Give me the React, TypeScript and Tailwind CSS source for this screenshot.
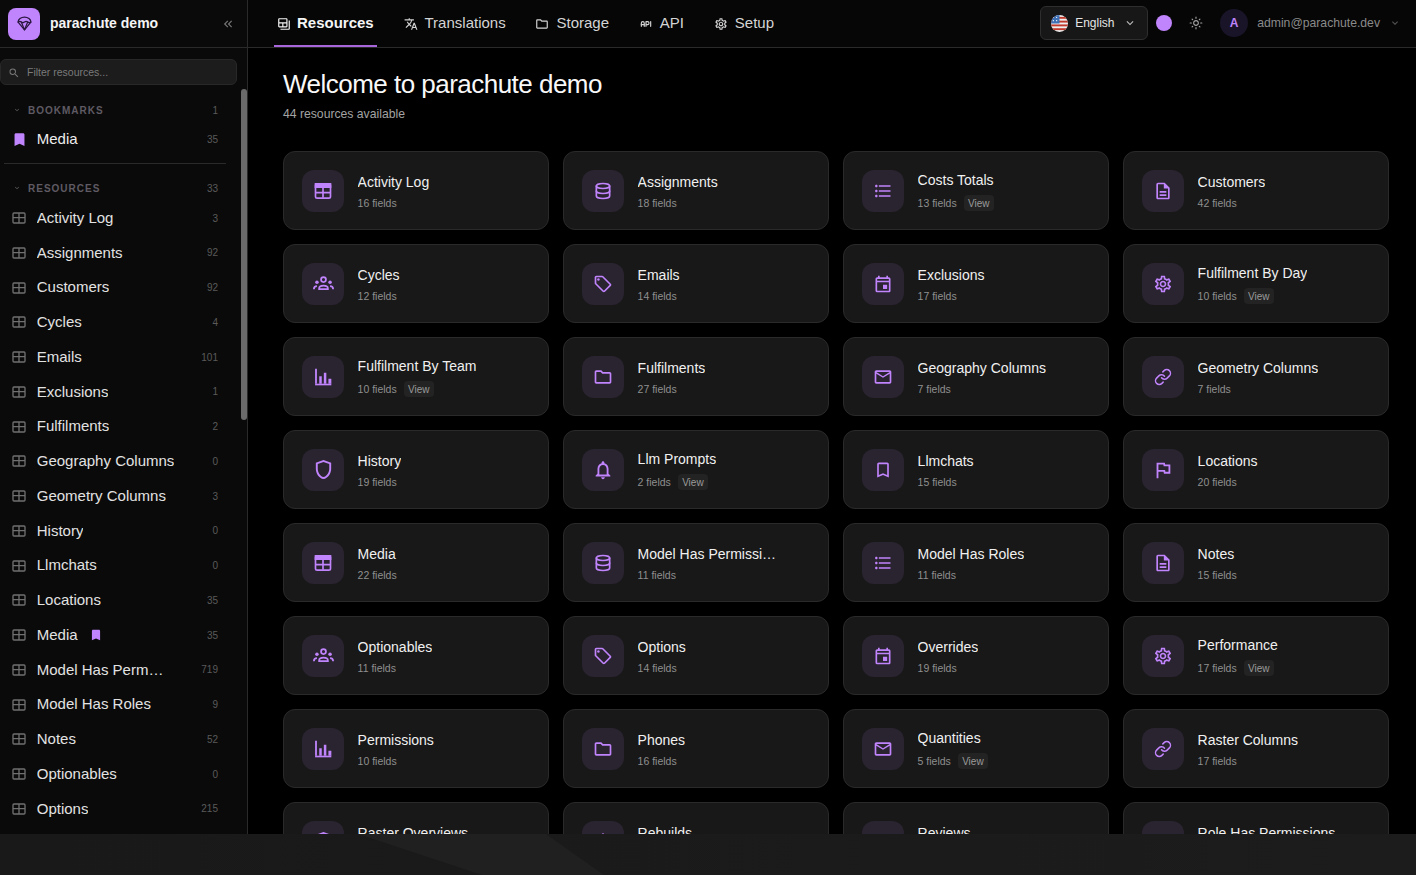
import type { IconType } from "react-icons";
import { LuLink } from "react-icons/lu";
import {
  MdBookmark,
  MdFormatListBulleted,
  MdKeyboardArrowDown,
  MdKeyboardDoubleArrowLeft,
  MdOutlineBackupTable,
  MdOutlineBookmarkBorder,
  MdOutlineDescription,
  MdOutlineEvent,
  MdOutlineFlag,
  MdOutlineFolder,
  MdOutlineLightMode,
  MdOutlineLocalOffer,
  MdOutlineMailOutline,
  MdOutlineNotifications,
  MdOutlineSettings,
  MdOutlineShield,
  MdSearch,
  MdTranslate,
} from "react-icons/md";
import { TbApi, TbDatabase } from "react-icons/tb";

const TableIcon = ({ className }: { className?: string }) => (
  <svg viewBox="0 0 24 24" className={className} fill="none" stroke="currentColor" strokeWidth="2">
    <rect x="3" y="3.500" width="18" height="17" rx="2" />
    <path d="M3 3.500h18v4H3z" fill="currentColor" />
    <path d="M3 14h18M12 7v13" />
  </svg>
);

const RowTableIcon = ({ className }: { className?: string }) => (
  <svg viewBox="0 0 24 24" className={className} fill="none" stroke="currentColor" strokeWidth="2">
    <rect x="3" y="4.500" width="18" height="15" rx="1.500" />
    <path d="M3 11.500h18M12 4.500v15" />
  </svg>
);

const ChartIcon = ({ className }: { className?: string }) => (
  <svg viewBox="0 0 24 24" className={className} fill="currentColor">
    <path d="M2.500 2h2.200v18h-2.200z" />
    <path d="M7.500 11h3v9h-3zM13 7h3v13h-3zM18.500 14h3.500v6h-3.500z" />
    <path d="M2.500 20h19.500v2H2.500z" />
  </svg>
);

const GroupIcon = ({ className }: { className?: string }) => (
  <svg viewBox="0 0 24 24" className={className} fill="none" stroke="currentColor" strokeWidth="2">
    <circle cx="12" cy="7.500" r="2.800" />
    <circle cx="4.500" cy="10.500" r="2" fill="currentColor" stroke="none" />
    <circle cx="19.500" cy="10.500" r="2" fill="currentColor" stroke="none" />
    <path d="M7 18.500v-.8c0-2 2.200-3.200 5-3.200s5 1.200 5 3.200v.8z" />
    <path d="M1 18.500c0-2.200 1.200-3.500 3.500-3.500M23 18.500c0-2.200-1.200-3.500-3.500-3.500" />
  </svg>
);

const cardIcons: { icon: IconType | typeof TableIcon; size: string }[] = [
  { icon: TableIcon, size: "w-[20px] h-[20px]" },
  { icon: TbDatabase, size: "w-[20px] h-[20px]" },
  { icon: MdFormatListBulleted, size: "w-[20px] h-[20px]" },
  { icon: MdOutlineDescription, size: "w-[20px] h-[20px]" },
  { icon: GroupIcon, size: "w-[21px] h-[21px]" },
  { icon: MdOutlineLocalOffer, size: "w-[20px] h-[20px]" },
  { icon: MdOutlineEvent, size: "w-[20px] h-[20px]" },
  { icon: MdOutlineSettings, size: "w-[20px] h-[20px]" },
  { icon: ChartIcon, size: "w-[20px] h-[20px]" },
  { icon: MdOutlineFolder, size: "w-[20px] h-[20px]" },
  { icon: MdOutlineMailOutline, size: "w-[20px] h-[20px]" },
  { icon: LuLink, size: "w-[18px] h-[18px]" },
  { icon: MdOutlineShield, size: "w-[23px] h-[23px]" },
  { icon: MdOutlineNotifications, size: "w-[22px] h-[22px]" },
  { icon: MdOutlineBookmarkBorder, size: "w-[20px] h-[20px]" },
  { icon: MdOutlineFlag, size: "w-[22px] h-[22px]" },
];

const resources = [
  { name: "Activity Log", fields: 16 },
  { name: "Assignments", fields: 18 },
  { name: "Costs Totals", fields: 13, view: true },
  { name: "Customers", fields: 42 },
  { name: "Cycles", fields: 12 },
  { name: "Emails", fields: 14 },
  { name: "Exclusions", fields: 17 },
  { name: "Fulfilment By Day", fields: 10, view: true },
  { name: "Fulfilment By Team", fields: 10, view: true },
  { name: "Fulfilments", fields: 27 },
  { name: "Geography Columns", fields: 7 },
  { name: "Geometry Columns", fields: 7 },
  { name: "History", fields: 19 },
  { name: "Llm Prompts", fields: 2, view: true },
  { name: "Llmchats", fields: 15 },
  { name: "Locations", fields: 20 },
  { name: "Media", fields: 22 },
  { name: "Model Has Permissions", fields: 11 },
  { name: "Model Has Roles", fields: 11 },
  { name: "Notes", fields: 15 },
  { name: "Optionables", fields: 11 },
  { name: "Options", fields: 14 },
  { name: "Overrides", fields: 19 },
  { name: "Performance", fields: 17, view: true },
  { name: "Permissions", fields: 10 },
  { name: "Phones", fields: 16 },
  { name: "Quantities", fields: 5, view: true },
  { name: "Raster Columns", fields: 17 },
  { name: "Raster Overviews", fields: 10 },
  { name: "Rebuilds", fields: 10 },
  { name: "Reviews", fields: 10 },
  { name: "Role Has Permissions", fields: 10 },
];

const sidebarRows = [
  { name: "Activity Log", count: 3 },
  { name: "Assignments", count: 92 },
  { name: "Customers", count: 92 },
  { name: "Cycles", count: 4 },
  { name: "Emails", count: 101 },
  { name: "Exclusions", count: 1 },
  { name: "Fulfilments", count: 2 },
  { name: "Geography Columns", count: 0 },
  { name: "Geometry Columns", count: 3 },
  { name: "History", count: 0 },
  { name: "Llmchats", count: 0 },
  { name: "Locations", count: 35 },
  { name: "Media", count: 35, bookmarked: true },
  { name: "Model Has Permissions", count: 719, narrow: true },
  { name: "Model Has Roles", count: 9 },
  { name: "Notes", count: 52 },
  { name: "Optionables", count: 0 },
  { name: "Options", count: 215 },
];

const tabs = [
  { label: "Resources", icon: MdOutlineBackupTable, active: true },
  { label: "Translations", icon: MdTranslate },
  { label: "Storage", icon: MdOutlineFolder },
  { label: "API", icon: TbApi },
  { label: "Setup", icon: MdOutlineSettings },
];

const ParachuteLogo = () => (
  <svg viewBox="0 0 24 24" className="w-[17px] h-[17px]" fill="none" stroke="#2a1740" strokeWidth="1.8" strokeLinejoin="round" strokeLinecap="round">
    <path d="M3 10a9 7 0 0 1 18 0l-9 11z" />
    <path d="M3 10c1.500-1.200 3-1.200 4.500 0s3 1.200 4.500 0 3-1.200 4.500 0 3 1.200 4.500 0" />
    <path d="M7.500 10 12 21l4.500-11" />
  </svg>
);

const UsFlag = () => (
  <svg viewBox="0 0 18 18" className="w-[17px] h-[17px] rounded-full">
    <rect width="18" height="18" fill="#eee" />
    <rect y="2" width="18" height="2" fill="#c0392b" />
    <rect y="6" width="18" height="2" fill="#c0392b" />
    <rect y="10" width="18" height="2" fill="#c0392b" />
    <rect y="14" width="18" height="2" fill="#c0392b" />
    <rect width="9" height="9" fill="#3d6fb5" />
    <circle cx="2.500" cy="2.500" r=".7" fill="#fff" />
    <circle cx="6" cy="2.500" r=".7" fill="#fff" />
    <circle cx="2.500" cy="6" r=".7" fill="#fff" />
    <circle cx="6" cy="6" r=".7" fill="#fff" />
  </svg>
);

const Sidebar = () => (
  <aside className="w-[248px] shrink-0 h-full bg-[#0a0a0a] border-r border-[#2a2a2a] flex flex-col overflow-hidden">
    <div className="h-[48px] shrink-0 border-b border-[#2a2a2a] flex items-center pl-2 pr-[12px]">
      <div className="w-8 h-8 rounded-lg bg-[#c084fc] flex items-center justify-center">
        <ParachuteLogo />
      </div>
      <span className="ml-[10px] flex-1 text-[14px] font-bold text-[#f5f5f5]">parachute demo</span>
      <MdKeyboardDoubleArrowLeft className="text-[#777] w-[14px] h-[14px]" />
    </div>

    <div className="flex flex-1 min-h-0">
      <div className="w-[241px] shrink-0">
        <div className="mt-[11px] w-[237px] h-[26px] pt-[1px] rounded-md bg-[#1c1c1c] border border-[#282828] flex items-center pl-[7px]">
          <MdSearch className="text-[#777] w-[12px] h-[12px]" />
          <span className="ml-[7px] text-[10.5px] text-[#7a7a7a]">Filter resources...</span>
        </div>

        <div className="mt-[15px] h-[20px] flex items-center pl-[13px] pr-[23px]">
          <MdKeyboardArrowDown className="text-[#666] w-[8px] h-[8px]" />
          <span className="ml-[7px] flex-1 text-[10px] font-bold tracking-[0.1em] text-[#5f5a63]">BOOKMARKS</span>
          <span className="text-[10px] text-[#5a5a5a]">1</span>
        </div>
        <div className="mt-[2px] h-[34px] flex items-center pl-[12px] pr-[23px]">
          <MdBookmark className="text-[#c084fc] w-[17px] h-[17px] -mx-[1.5px]" />
          <span className="ml-[10.75px] flex-1 text-[15px] text-[#ededed]">Media</span>
          <span className="text-[10px] text-[#5a5a5a]">35</span>
        </div>

        <div className="mt-[7px] ml-[4px] w-[222px] border-t border-[#2a2a2a]" />

        <div className="mt-[14px] h-[20px] flex items-center pl-[13px] pr-[23px]">
          <MdKeyboardArrowDown className="text-[#666] w-[8px] h-[8px]" />
          <span className="ml-[7px] flex-1 text-[10px] font-bold tracking-[0.1em] text-[#5f5a63]">RESOURCES</span>
          <span className="text-[10px] text-[#5a5a5a]">33</span>
        </div>

        <div className="mt-[2.7px]">
          {sidebarRows.map((row) => (
            <div key={row.name} className="h-[34.75px] flex items-center pl-[11px] pr-[23px]">
              <RowTableIcon className="text-[#707070] w-[16px] h-[16px] shrink-0" />
              <span className={row.narrow ? "ml-[9.75px] max-w-[127px] truncate text-[15px] text-[#e2e2e2]" : "ml-[9.75px] max-w-[145px] truncate text-[15px] text-[#e2e2e2]"}>
                {row.name}
              </span>
              {row.bookmarked && <MdBookmark className="ml-[11px] text-[#c084fc] w-[14px] h-[14px]" />}
              <span className="ml-auto text-[10px] text-[#5a5a5a]">{row.count}</span>
            </div>
          ))}
        </div>
      </div>

      <div className="w-[6px] shrink-0 pt-[41px]">
        <div className="h-[331px] rounded-full bg-[#6b6b6b]" />
      </div>
    </div>
  </aside>
);

const TopNav = () => (
  <header className="h-[48px] shrink-0 bg-[#060606] border-b border-[#2a2a2a] flex items-center pl-[26px] pr-[15px]">
    <nav className="flex gap-[23.8px] h-full">
      {tabs.map((tab) => {
        const Icon = tab.icon;
        return (
          <div
            key={tab.label}
            className={
              tab.active
                ? "h-[47px] pt-[2px] px-[3px] flex items-center gap-[6px] border-b-2 border-[#a866db] text-[15px] font-bold text-[#f5f5f5]"
                : "h-[47px] pt-[2px] px-[3px] flex items-center gap-[7px] border-b-2 border-transparent text-[15px] text-[#d4d4d4]"
            }
          >
            <Icon className="w-[14px] h-[14px]" />
            <span>{tab.label}</span>
          </div>
        );
      })}
    </nav>

    <div className="ml-auto mb-[1px] flex items-center">
      <div className="w-[108px] h-[34px] rounded-md bg-[#171717] border border-[#2e2e2e] flex items-center pl-[10px]">
        <UsFlag />
        <span className="ml-[7px] text-[12px] text-[#e5e5e5]">English</span>
        <MdKeyboardArrowDown className="ml-[8px] text-[#bbb] w-[14px] h-[14px]" />
      </div>
      <div className="ml-[8px] w-[16px] h-[16px] rounded-full bg-[#c084fc]" />
      <MdOutlineLightMode className="ml-[17px] text-[#a3a3a3] w-[14px] h-[14px]" />
      <div className="ml-[17px] w-[28px] h-[28px] rounded-full bg-[#1a1428] flex items-center justify-center text-[12px] font-bold text-[#c084fc]">A</div>
      <span className="ml-[9px] text-[12.2px] text-[#8a8a8a]">admin@parachute.dev</span>
      <MdKeyboardArrowDown className="ml-[9px] text-[#555] w-[12px] h-[12px]" />
    </div>
  </header>
);

const ResourceCard = ({ name, fields, view, index }: { name: string; fields: number; view?: boolean; index: number }) => {
  const { icon: Icon, size } = cardIcons[index % cardIcons.length];
  return (
    <div className="h-[79px] rounded-xl bg-[#181818] border border-[#2a2a2a] flex items-center pl-[18px]">
      <div className="w-[42px] h-[42px] rounded-xl bg-[#2a2330] flex items-center justify-center shrink-0 text-[#c084fc]">
        <Icon className={size} />
      </div>
      <div className="ml-[13.6px] flex flex-col gap-[5px] min-w-0">
        <div className="max-w-[140px] truncate text-[14px] leading-5 text-[#f0f0f0]">{name}</div>
        <div className="flex items-center gap-[7px]">
          <span className="text-[10.5px] leading-3 text-[#8f8f8f]">{fields} fields</span>
          {view && <span className="w-[30px] h-4 rounded bg-[#232323] flex items-center justify-center text-[10px] text-[#9a9a9a]">View</span>}
        </div>
      </div>
    </div>
  );
};

const App = () => {
  return (
    <div className="w-[1416px] h-[875px] flex flex-col overflow-hidden bg-black font-['Liberation_Sans',Arial,sans-serif]">
      <div className="flex h-[834px] shrink-0 overflow-hidden">
        <Sidebar />
        <div className="flex-1 min-w-0 flex flex-col">
          <TopNav />
          <main className="flex-1 min-h-0 overflow-hidden pl-[35px] pr-[27px]">
            <h1 className="mt-[19px] text-[26px] leading-[34px] tracking-[-0.52px] text-[#f8f8f8]">Welcome to parachute demo</h1>
            <p className="mt-[5px] text-[12.2px] leading-4 text-[#a3a3a3]">44 resources available</p>
            <div className="mt-[29px] grid grid-cols-4 gap-[14px]">
              {resources.map((resource, index) => (
                <ResourceCard key={resource.name} index={index} {...resource} />
              ))}
            </div>
          </main>
        </div>
      </div>

      {/* band along the bottom edge, with the lighter diagonal */}
      <div className="h-[41px] shrink-0 bg-gradient-to-r from-[#191919] to-[#1c1c1c]">
        <svg viewBox="0 0 1416 41" className="w-full h-full">
          <polygon points="358,0 546,0 604,41 482,41" fill="#202020" />
        </svg>
      </div>
    </div>
  );
};

export default App;
